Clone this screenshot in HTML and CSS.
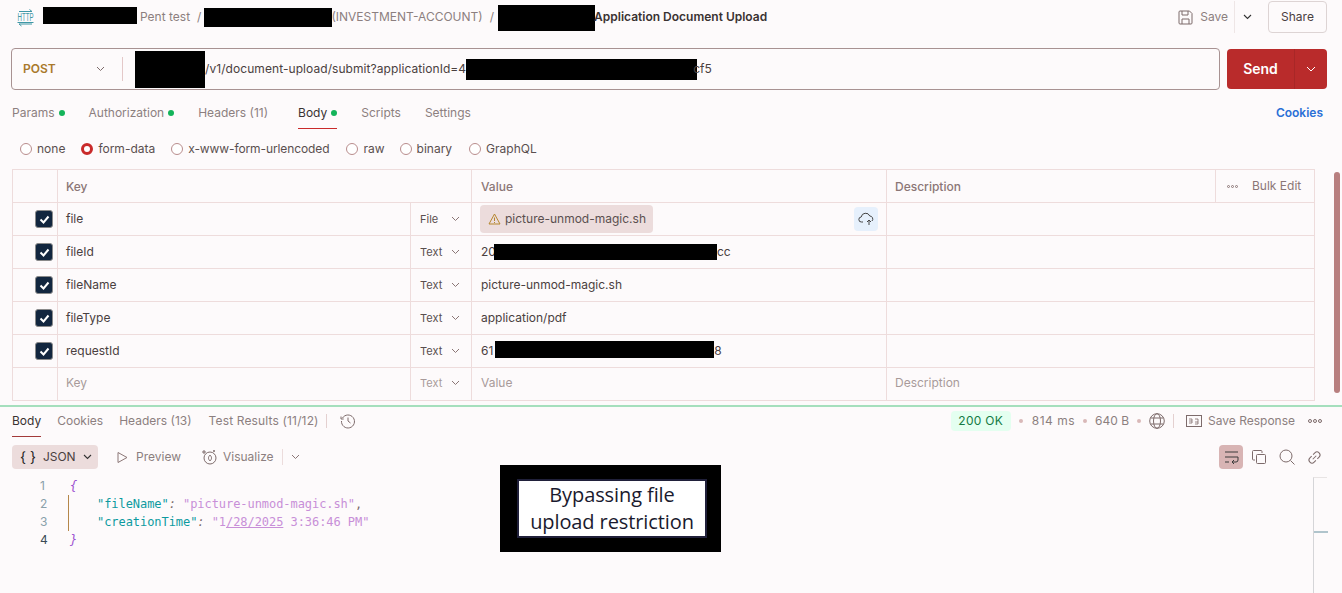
FILE: index.html
```html
<!DOCTYPE html>
<html lang="en">
<head>
<meta charset="utf-8">
<title>Application Document Upload</title>
<link rel="stylesheet" href="styles.css">
</head>
<body>
<header class="top">
  <svg class="http" width="17" height="17" viewBox="0 0 17 17"><path d="M2 2.500h13M12.500 .5l2.500 2M15 15H2M4.500 17L2 15" fill="none" stroke="#3f97a5" stroke-width="1"/><text x="0.500" y="12" class="http-t" textLength="16" lengthAdjust="spacingAndGlyphs">HTTP</text></svg>
  <span class="redact r1"></span>
  <span class="crumb c1">Pent test</span>
  <span class="crumb c2">/</span>
  <span class="redact r2"></span>
  <span class="crumb c-inv">(INVESTMENT-ACCOUNT)</span>
  <span class="crumb c3">/</span>
  <span class="redact r3"></span>
  <span class="crumb-now">Application Document Upload</span>
  <span class="spacer"></span>
  <svg class="save-i" width="15" height="15" viewBox="0 0 15 15"><path d="M1 2a1 1 0 0 1 1-1h9.500L14 3.500V13a1 1 0 0 1-1 1H2a1 1 0 0 1-1-1zM4 1v4h6V1M4 14V9h7v5" fill="none" stroke="#7d6b6b"/></svg>
  <span class="save-t">Save</span>
  <span class="save-div"></span>
  <svg class="save-c" width="9" height="6" viewBox="0 0 9 6"><path d="M1 1l3.500 3.500L8 1" fill="none" stroke="#333" stroke-width="1.100"/></svg>
  <span class="share">Share</span>
</header>

<section class="urlrow">
  <div class="urlbox">
    <span class="method">POST</span>
    <svg class="method-c" width="9" height="6" viewBox="0 0 9 6"><path d="M1 1l3.500 3.500L8 1" fill="none" stroke="#7d6b6b"/></svg>
    <span class="url-div"></span>
    <span class="redact r4"></span>
    <span class="url">/v1/document-upload/submit?applicationId=4</span>
    <span class="redact r5"></span>
    <span class="url url-end">cf5</span>
  </div>
  <div class="send">
    <span class="send-t">Send</span>
    <span class="send-c"><svg width="10" height="6" viewBox="0 0 10 6"><path d="M1 1l4 4 4-4" fill="none" stroke="#fff"/></svg></span>
  </div>
</section>

<nav class="tabs">
  <span class="tab t-params">Params<i class="dot"></i></span>
  <span class="tab t-auth">Authorization<i class="dot"></i></span>
  <span class="tab t-head">Headers (11)</span>
  <span class="tab t-body">Body<i class="dot"></i></span>
  <span class="tab t-scr">Scripts</span>
  <span class="tab">Settings</span>
  <span class="spacer"></span>
  <span class="cookies">Cookies</span>
</nav>

<div class="radios">
  <span class="radio"></span><span class="rlabel l-none">none</span>
  <span class="radio on"></span><span class="rlabel l-form">form-data</span>
  <span class="radio"></span><span class="rlabel l-url">x-www-form-urlencoded</span>
  <span class="radio"></span><span class="rlabel l-raw">raw</span>
  <span class="radio"></span><span class="rlabel l-bin">binary</span>
  <span class="radio"></span><span class="rlabel">GraphQL</span>
</div>

<section class="table">
  <div class="row head">
    <div class="cell c-check"></div>
    <div class="cell c-keyfull">Key</div>
    <div class="cell c-val">Value</div>
    <div class="cell c-descshort">Description</div>
    <div class="cell c-bulk"><svg width="11" height="3" viewBox="0 0 11 3"><g fill="none" stroke="#8b7676"><circle cx="1.500" cy="1.500" r="1"/><circle cx="5.500" cy="1.500" r="1"/><circle cx="9.500" cy="1.500" r="1"/></g></svg><span class="bulk-t">Bulk Edit</span></div>
  </div>
  <div class="row">
    <div class="cell c-check"><span class="check"><svg width="11" height="9" viewBox="0 0 11 9"><path d="M1.500 4.500l3 3 5-6" fill="none" stroke="#fff" stroke-width="2"/></svg></span></div>
    <div class="cell c-key">file</div>
    <div class="cell c-type">File<svg class="chev" width="9" height="6" viewBox="0 0 9 6"><path d="M1 1l3.500 3.500L8 1" fill="none" stroke="#8b7676"/></svg></div>
    <div class="cell c-val file-cell">
      <span class="chip"><svg width="13" height="12" viewBox="0 0 13 12"><path d="M6.500 1L12 11H1zM6.500 4.500v3.500M6.500 9v1" fill="none" stroke="#b5872f" stroke-linejoin="round"/></svg>picture-unmod-magic.sh</span>
      <span class="spacer"></span>
      <span class="cloud"><svg width="16" height="14" viewBox="0 0 16 14"><path d="M5 10H3.500a2.500 2.500 0 0 1-.3-5A4.500 4.500 0 0 1 11.800 4a3 3 0 0 1 2.200 5M11 13V8M9 10l2-2 2 2" fill="none" stroke="#444"/></svg></span>
    </div>
    <div class="cell c-desc"></div>
  </div>
  <div class="row">
    <div class="cell c-check"><span class="check"><svg width="11" height="9" viewBox="0 0 11 9"><path d="M1.500 4.500l3 3 5-6" fill="none" stroke="#fff" stroke-width="2"/></svg></span></div>
    <div class="cell c-key">fileId</div>
    <div class="cell c-type">Text<svg class="chev" width="9" height="6" viewBox="0 0 9 6"><path d="M1 1l3.500 3.500L8 1" fill="none" stroke="#8b7676"/></svg></div>
    <div class="cell c-val">20<span class="redact r6"></span>cc</div>
    <div class="cell c-desc"></div>
  </div>
  <div class="row">
    <div class="cell c-check"><span class="check"><svg width="11" height="9" viewBox="0 0 11 9"><path d="M1.500 4.500l3 3 5-6" fill="none" stroke="#fff" stroke-width="2"/></svg></span></div>
    <div class="cell c-key">fileName</div>
    <div class="cell c-type">Text<svg class="chev" width="9" height="6" viewBox="0 0 9 6"><path d="M1 1l3.500 3.500L8 1" fill="none" stroke="#8b7676"/></svg></div>
    <div class="cell c-val">picture-unmod-magic.sh</div>
    <div class="cell c-desc"></div>
  </div>
  <div class="row">
    <div class="cell c-check"><span class="check"><svg width="11" height="9" viewBox="0 0 11 9"><path d="M1.500 4.500l3 3 5-6" fill="none" stroke="#fff" stroke-width="2"/></svg></span></div>
    <div class="cell c-key">fileType</div>
    <div class="cell c-type">Text<svg class="chev" width="9" height="6" viewBox="0 0 9 6"><path d="M1 1l3.500 3.500L8 1" fill="none" stroke="#8b7676"/></svg></div>
    <div class="cell c-val">application/pdf</div>
    <div class="cell c-desc"></div>
  </div>
  <div class="row">
    <div class="cell c-check"><span class="check"><svg width="11" height="9" viewBox="0 0 11 9"><path d="M1.500 4.500l3 3 5-6" fill="none" stroke="#fff" stroke-width="2"/></svg></span></div>
    <div class="cell c-key">requestId</div>
    <div class="cell c-type">Text<svg class="chev" width="9" height="6" viewBox="0 0 9 6"><path d="M1 1l3.500 3.500L8 1" fill="none" stroke="#8b7676"/></svg></div>
    <div class="cell c-val">61<span class="redact r7"></span>8</div>
    <div class="cell c-desc"></div>
  </div>
  <div class="row ghost">
    <div class="cell c-check"></div>
    <div class="cell c-key">Key</div>
    <div class="cell c-type">Text<svg class="chev" width="9" height="6" viewBox="0 0 9 6"><path d="M1 1l3.500 3.500L8 1" fill="none" stroke="#8b7676"/></svg></div>
    <div class="cell c-val">Value</div>
    <div class="cell c-desc">Description</div>
  </div>
</section>

<div class="pane-line"></div>

<nav class="rtabs">
  <span class="rtab active">Body</span>
  <span class="rtab">Cookies</span>
  <span class="rtab">Headers (13)</span>
  <span class="rtab rt-test">Test Results (11/12)</span>
  <span class="rdiv"></span>
  <svg class="hist" width="16" height="16" viewBox="0 0 16 16"><path d="M2.500 5A6.500 6.500 0 1 1 1.500 8M1 3.500V6h2.700M8 4.500V8l2.500 2" fill="none" stroke="#7d6b6b"/></svg>
  <span class="spacer"></span>
  <span class="ok">200 OK</span>
  <i class="sep s1"></i><span class="meta m-wide">814 ms</span>
  <i class="sep s2"></i><span class="meta">640 B</span>
  <i class="sep s3"></i>
  <svg class="globe" width="16" height="16" viewBox="0 0 16 16"><g fill="none" stroke="#7d6b6b"><circle cx="8" cy="8" r="7.300"/><ellipse cx="8" cy="8" rx="3.500" ry="7.300"/><path d="M1.500 5h13M1.500 11h13"/></g></svg>
  <span class="rdiv d2"></span>
  <svg class="eg" width="16" height="12" viewBox="0 0 16 12"><rect x=".5" y=".5" width="15" height="11" fill="none" stroke="#7d6b6b"/><path d="M3 6h3M3 4h3v4H3M9 4h3v3H9M12 7v2H9" fill="none" stroke="#7d6b6b" stroke-width=".8"/></svg>
  <span class="meta save-r">Save Response</span>
  <svg class="more" width="14" height="4" viewBox="0 0 14 4"><g fill="none" stroke="#7d6b6b"><circle cx="2" cy="2" r="1.500"/><circle cx="7" cy="2" r="1.500"/><circle cx="12" cy="2" r="1.500"/></g></svg>
</nav>

<div class="rtools">
  <span class="fmt"><span class="braces">{ }</span>JSON<svg width="9" height="6" viewBox="0 0 9 6"><path d="M1 1l3.500 3.500L8 1" fill="none" stroke="#333" stroke-width="1.100"/></svg></span>
  <svg class="pv-i" width="13" height="13" viewBox="0 0 13 13"><path d="M2 1.500v10l9-5z" fill="none" stroke="#8b7676"/></svg>
  <span class="tool pv">Preview</span>
  <svg class="vz-i" width="16" height="16" viewBox="0 0 16 16"><g fill="none" stroke="#7d6b6b"><circle cx="9" cy="9" r="6"/><path d="M9 6c-2 2-2 4 0 6 2-2 2-4 0-6M3 1v4M1 3h4M13 1v2M12 2h2"/></g></svg>
  <span class="tool">Visualize</span>
  <span class="tdiv"></span>
  <svg class="tc" width="9" height="6" viewBox="0 0 9 6"><path d="M1 1l3.500 3.500L8 1" fill="none" stroke="#8b7676"/></svg>
  <span class="spacer"></span>
  <span class="wrap"><svg width="15" height="13" viewBox="0 0 15 13"><path d="M1 1h13M1 6h13M1 11h4M14 6v3a2 2 0 0 1-2 2H8M10 9l-2 2 2 2" fill="none" stroke="#3a3a3a"/></svg></span>
  <svg class="copy" width="14" height="14" viewBox="0 0 14 14"><path d="M3 10H1.500a1 1 0 0 1-1-1V1.500a1 1 0 0 1 1-1H9a1 1 0 0 1 1 1V3" fill="none" stroke="#7d6b6b"/><rect x="4.500" y="4.500" width="9" height="9" rx="1" fill="none" stroke="#7d6b6b"/></svg>
  <svg class="search" width="16" height="16" viewBox="0 0 16 16"><circle cx="7" cy="7" r="6" fill="none" stroke="#7d6b6b"/><path d="M11.500 11.500L15.500 15.500" stroke="#7d6b6b"/></svg>
  <svg class="link" width="15" height="15" viewBox="0 0 15 15"><g transform="rotate(-45 7.500 7.500)" fill="none" stroke="#7d6b6b"><path d="M6.500 4.500H4a3 3 0 0 0 0 6h2.500M8.500 4.500H11a3 3 0 0 1 0 6H8.500M5 7.500h5"/></g></svg>
</div>

<section class="code">
  <div class="line"><span class="ln">1</span><span class="br">{</span></div>
  <div class="line"><span class="ln">2</span><span class="gutter"></span><span class="k">"fileName"</span><span class="p colon">: </span><span class="s">"picture-unmod-magic.sh"</span><span class="p">,</span></div>
  <div class="line"><span class="ln">3</span><span class="gutter"></span><span class="k">"creationTime"</span><span class="p colon">: </span><span class="s">"1<u>/28/2025</u> 3:36:46 PM"</span></div>
  <div class="line"><span class="ln cur">4</span><span class="br">}</span></div>
</section>

<div class="minimap"><span class="mini-tick"></span></div>
<div class="scrollbar"></div>
<div class="note"><div class="note-in">Bypassing file<br>upload restriction</div></div>
</body>
</html>
```
FILE: styles.css
```css
* { box-sizing: border-box; }
html, body { margin: 0; padding: 0; }
body {
  position: relative;
  width: 1342px;
  height: 593px;
  overflow: hidden;
  background: #fdfafb;
  color: #4a4040;
  font: 12px/16px Inter, "Liberation Sans", sans-serif;
}
.spacer { flex: 1; }
.redact { display: inline-block; background: #000; flex: none; }

.top { display: flex; align-items: center; height: 34px; padding: 0 15px 0 17px; }
.http { overflow: visible; margin-top: 0; }
.http-t { font: 10px "Liberation Sans", sans-serif; fill: #3f97a5; text-decoration: underline; }
.r1 { width: 94px; height: 17px; margin-left: 9px; margin-top: -3px; }
.crumb { color: #8c7f7f; }
.c1 { margin-left: 3px; }
.c2 { margin-left: 7px; margin-right: 3px; }
.c-inv { margin-left: -1px; }
.c3 { margin-left: 7px; margin-right: 4px; }
.r2 { width: 128px; height: 19px; margin-left: 0; }
.r3 { width: 97px; height: 26px; margin-top: 2px; }
.crumb-now { font-weight: 600; color: #3a3232; margin-left: -1px; }
.save-t { margin-left: 7px; color: #8c7f7f; }
.save-div { width: 1px; height: 32px; background: #eee6e6; margin-left: 6px; }
.save-c { margin-left: 8px; }
.share {
  display: flex; align-items: center; justify-content: center;
  width: 59px; height: 32px; margin-left: 16px;
  border: 1px solid #ddd4d4; border-radius: 4px; color: #4a4040;
}

.urlrow { display: flex; gap: 7px; height: 42px; margin-top: 14px; padding: 0 15px 0 11px; }
.urlbox {
  flex: 1; display: flex; align-items: center;
  padding-left: 11px; border: 1px solid #a89292; border-radius: 4px; background: #fdfafb;
}
.method { width: 77px; font-weight: 600; color: #a9792b; }
.method-c { margin-right: 17px; margin-left: -4px; }
.url-div { width: 1px; height: 24px; background: #e4c8c8; margin-right: 12px; }
.r4 { width: 70px; height: 37px; }
.r5 { width: 231px; height: 21px; }
.url { color: #4a4040; letter-spacing: 0.07px; }
.url-end { margin-left: -4px; }
.send {
  display: flex; width: 100px; height: 40px; margin-top: 1px;
  background: #b92b2b; border-radius: 4px; color: #fff;
}
.send-t { width: 67px; font-size: 14px; font-weight: 600; line-height: 40px; text-align: center; }
.send-c { flex: 1; display: flex; align-items: center; justify-content: center; border-left: 1px solid #a82727; }

.tabs { display: flex; height: 31px; margin-top: 8px; padding: 0 19px 0 12px; align-items: flex-start; }
.tab { position: relative; padding: 7px 0 7px; color: #8c7f7f; height: 31px; display: flex; align-items: flex-start; }
.dot { width: 6px; height: 6px; margin: 5px 0 0 4px; background: #14b45a; border-radius: 50%; }
.t-params { margin-right: 24px; }
.t-auth { margin-right: 24px; }
.t-head { margin-right: 30px; }
.t-body { color: #3a3232; margin-right: 24px; border-bottom: 1px solid #c92a2a; }
.t-scr { margin-right: 24px; }
.cookies { padding-top: 7px; font-weight: 600; color: #2a6fd6; }

.radios { display: flex; align-items: center; height: 40px; padding-left: 20px; }
.radio { width: 12px; height: 12px; border: 1px solid #b98d8d; border-radius: 50%; flex: none; background: #fff; }
.radio.on { border: 3.500px solid #c92a2a; }
.rlabel { margin-left: 5px; color: #5a4f4f; }
.l-none { margin-right: 16px; }
.l-form { margin-right: 16px; }
.l-url { margin-right: 17px; letter-spacing: -0.1px; }
.l-raw { margin-right: 15px; }
.l-bin { margin-right: 17px; }

.table { width: 1303px; margin-left: 12px; border: solid #eedcdc; border-width: 1px 1px 0 1px; }
.row { display: flex; height: 33px; border-bottom: 1px solid #eedcdc; }
.cell { display: flex; align-items: center; padding-left: 8px; border-right: 1px solid #eedcdc; color: #4a4040; }
.cell:last-child { border-right: 0; }
.c-check { width: 45px; padding-left: 22px; }
.c-key { width: 353px; }
.c-keyfull { width: 414px; }
.c-type { width: 61px; color: #5a4f4f; font-size: 11px; padding-left: 9px; }
.c-val { width: 415px; padding-left: 9px; }
.c-desc { flex: 1; }
.c-descshort { width: 329px; }
.c-bulk { flex: 1; padding-left: 11px; color: #8c7f7f; }
.bulk-t { margin-left: 14px; }
.head .cell { font-weight: 500; color: #8b7676; padding-top: 1px; }
.head .c-bulk { font-weight: 400; padding-top: 0; }
.check {
  display: flex; align-items: center; justify-content: center;
  width: 18px; height: 18px; background: #12263f; border-radius: 3px; border: 1px solid #8a8a8a;
}
.c-type .chev { margin-left: auto; margin-right: 11px; }
.chip {
  display: flex; align-items: center; gap: 4px;
  height: 28px; width: 173px; padding-left: 8px;
  background: #ecdcdc; border-radius: 4px; color: #5a4f4f;
}
.file-cell { padding-left: 8px; padding-right: 8px; }
.cloud {
  display: flex; align-items: center; justify-content: center;
  width: 24px; height: 24px; background: #e6f0fc; border-radius: 4px;
}
.r6 { width: 223px; height: 16px; margin-left: -2px; margin-top: -1px; }
.r7 { width: 219px; height: 17px; margin-left: 2px; margin-top: -3px; }
.ghost .cell { color: #a89a9a; padding-bottom: 2px; }
.ghost .c-check { padding-bottom: 0; }

.pane-line { height: 2px; margin-top: 4px; background: #a5dfbd; }

.rtabs { display: flex; align-items: flex-start; height: 30px; padding: 6px 20px 0 12px; }
.rtab { margin-right: 16px; height: 24px; color: #8c7f7f; }
.rtab.active { color: #3a3232; border-bottom: 1px solid #a33a3a; }
.rt-test { margin-left: 1px; letter-spacing: 0.15px; }
.rdiv { width: 1px; height: 14px; margin: 1px 0 0 -9px; background: #e4d0d0; }
.hist { margin-left: 13px; }
.ok {
  width: 60px; height: 20px; margin-top: -2px;
  background: #e4fff0; border-radius: 4px; color: #157a45; font-weight: 400; letter-spacing: 0.3px; line-height: 20px; text-align: center;
}
.sep { width: 4px; height: 4px; margin: 6px 8px 0 8px; background: #d9b8b8; border-radius: 50%; }
.s1 { margin-right: 9px; }
.s2 { margin-right: 8px; }
.s3 { margin-right: 8px; }
.meta { color: #8c7f7f; }
.m-wide { letter-spacing: 0.5px; }
.d2 { margin: 1px 0 0 8px; }
.eg { margin: 2px 0 0 12px; }
.save-r { margin-left: 6px; }
.more { margin: 6px 0 0 13px; }

.rtools { display: flex; align-items: center; height: 24px; margin-top: 8px; padding: 0 20px 0 12px; }
.fmt {
  display: flex; align-items: center; width: 86px; height: 24px; padding-left: 8px;
  background: #ecdcdc; border-radius: 4px; color: #4a4040;
}
.braces { margin-right: 7px; font-size: 14px; color: #222; }
.fmt svg { margin-left: 7px; }
.pv-i { margin-left: 18px; }
.tool { color: #8c7f7f; }
.pv { margin-left: 7px; }
.vz-i { margin-left: 20px; margin-right: 6px; }
.tdiv { width: 1px; height: 16px; margin-left: 8px; background: #ecdcdc; }
.tc { margin-left: 8px; }
.wrap {
  display: flex; align-items: center; justify-content: center;
  width: 24px; height: 24px; background: #d8b4b4; border-radius: 4px;
}
.copy { margin-left: 9px; }
.search { margin-left: 13px; }
.link { margin-left: 12px; }

.code { margin-top: 8px; font: 12px/18px "DejaVu Sans Mono", monospace; letter-spacing: -0.06px; }
.line { display: flex; height: 18px; padding-left: 40px; white-space: pre; }
.ln { width: 8px; margin-right: 20px; color: #8aa0aa; font-family: Inter, sans-serif; }
.ln.cur { color: #3a4a55; }
.br { color: #9b4fd0; font-style: italic; padding-left: 2px; }
.gutter { width: 1px; margin-right: 28px; background: #b5874a; }
.k { color: #0d9aa0; }
.p { color: #7d6b6b; }
.colon { font-style: italic; }
.s { color: #c88fd8; }

.minimap { position: absolute; left: 1313px; top: 477px; width: 14px; height: 116px; border-left: 1px solid #d5d5d8; border-top: 1px solid #e8e4e4; }
.mini-tick { position: absolute; left: 0; top: 53px; width: 14px; height: 2px; background: #b0c4cc; }
.scrollbar { position: absolute; left: 1334px; top: 172px; width: 6px; height: 221px; background: #b87f7f; border-radius: 3px; }
.note { position: absolute; left: 500px; top: 465px; width: 221px; height: 87px; padding: 14px 14px 14px 17px; background: #000; }
.note-in {
  height: 59px; border: 2px solid #20203a; background: #fff; color: #1a1a2e;
  font: 20px/27px "Open Sans", sans-serif; letter-spacing: -0.1px; text-align: center;
}
```
